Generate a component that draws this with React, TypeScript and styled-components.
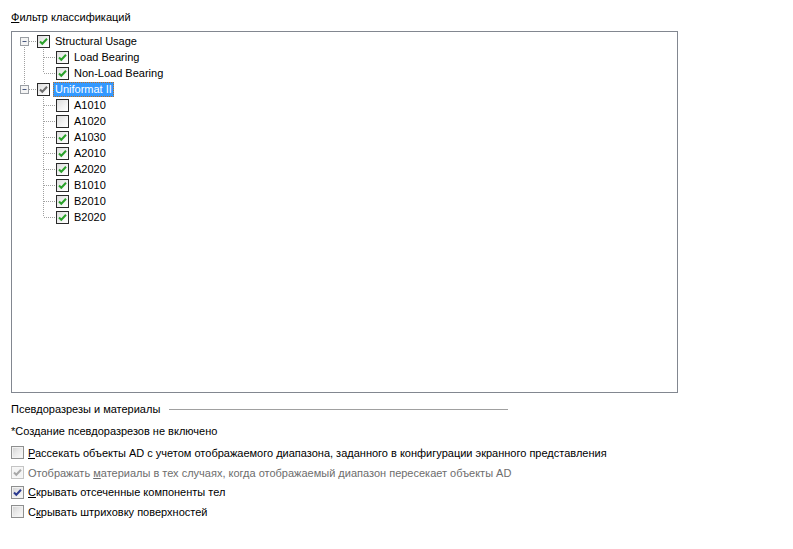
import React from "react";
import styled, { createGlobalStyle } from "styled-components";

const GlobalStyle = createGlobalStyle`
  html, body {
    margin: 0;
    padding: 0;
    background: #ffffff;
  }
  body {
    font-family: "Liberation Sans", Arial, sans-serif;
    font-size: 11px;
    color: #000000;
  }
`;

type TreeItem = {
  label: string;
  checked: boolean;
  partial?: boolean;
  selected?: boolean;
  children?: TreeItem[];
};

const tree: TreeItem[] = [
  {
    label: "Structural Usage",
    checked: true,
    children: [
      { label: "Load Bearing", checked: true },
      { label: "Non-Load Bearing", checked: true },
    ],
  },
  {
    label: "Uniformat II",
    checked: true,
    partial: true,
    selected: true,
    children: [
      { label: "A1010", checked: false },
      { label: "A1020", checked: false },
      { label: "A1030", checked: true },
      { label: "A2010", checked: true },
      { label: "A2020", checked: true },
      { label: "B1010", checked: true },
      { label: "B2010", checked: true },
      { label: "B2020", checked: true },
    ],
  },
];

const options = [
  {
    before: "",
    key: "Р",
    after: "ассекать объекты AD с учетом отображаемого диапазона, заданного в конфигурации экранного представления",
    checked: false,
    disabled: false,
  },
  {
    before: "Отображать ",
    key: "м",
    after: "атериалы в тех случаях, когда отображаемый диапазон пересекает объекты AD",
    checked: true,
    disabled: true,
  },
  {
    before: "",
    key: "С",
    after: "крывать отсеченные компоненты тел",
    checked: true,
    disabled: false,
  },
  {
    before: "С",
    key: "к",
    after: "рывать штриховку поверхностей",
    checked: false,
    disabled: false,
  },
];

const Page = styled.div`
  width: 793px;
  height: 549px;
  box-sizing: border-box;
  padding: 11px 0 0 11px;
  display: flex;
  flex-direction: column;
`;

const Caption = styled.div`
  line-height: 13px;
  height: 13px;
  margin-bottom: 7px;
`;

const TreeBox = styled.div`
  width: 667px;
  height: 362px;
  box-sizing: border-box;
  border: 1px solid #828790;
  padding-top: 1px;
  display: flex;
  flex-direction: column;
`;

const Row = styled.div`
  height: 16px;
  display: flex;
  align-items: center;
`;

const Gutter = styled.div<{ $w: number }>`
  width: ${(p) => p.$w}px;
  height: 16px;
  flex: none;
`;

const Label = styled.span<{ $selected?: boolean }>`
  margin-left: 3px;
  padding: 0 2px;
  height: 15px;
  line-height: 15px;
  box-sizing: border-box;
  white-space: nowrap;
  color: ${(p) => (p.$selected ? "#ffffff" : "#000000")};
  background: ${(p) => (p.$selected ? "#3399ff" : "transparent")};
  outline: ${(p) => (p.$selected ? "1px dotted #c07020" : "none")};
  outline-offset: -1px;
`;

const TreeCheck = styled.span`
  width: 13px;
  height: 13px;
  flex: none;
  box-sizing: border-box;
  border: 1px solid #2a2a2a;
  background: linear-gradient(135deg, #dcdcdc 0%, #f4f4f4 60%, #ffffff 100%);
  display: flex;
  align-items: center;
  justify-content: center;
`;

const SectionHead = styled.div`
  margin-top: 10px;
  height: 13px;
  line-height: 13px;
  display: flex;
  align-items: center;
`;

const SectionRule = styled.span`
  margin-left: 9px;
  width: 339px;
  height: 1px;
  background: #a0a0a0;
`;

const Note = styled.div`
  margin-top: 9px;
  height: 13px;
  line-height: 13px;
`;

const OptionList = styled.div`
  margin-top: 5px;
  display: flex;
  flex-direction: column;
`;

const OptionRow = styled.label<{ $disabled?: boolean }>`
  height: 19.7px;
  display: flex;
  align-items: center;
  color: ${(p) => (p.$disabled ? "#6d6d6d" : "#000000")};
  white-space: nowrap;
`;

const Box = styled.span<{ $disabled?: boolean }>`
  width: 13px;
  height: 13px;
  flex: none;
  box-sizing: border-box;
  margin-right: 4px;
  border: 1px solid ${(p) => (p.$disabled ? "#c4c4c4" : "#8e8f8f")};
  background: ${(p) =>
    p.$disabled
      ? "#f4f4f4"
      : "linear-gradient(135deg, #d0d0d0 0%, #e8e8e8 45%, #fbfbfb 100%)"};
  box-shadow: inset 0 0 0 1px ${(p) => (p.$disabled ? "#f7f7f7" : "#f2f2f2")};
  display: flex;
  align-items: center;
  justify-content: center;
`;

const Key = styled.u`
  text-decoration-thickness: 1px;
  text-underline-offset: 1px;
`;

const Check = ({ color }: { color: string }) => (
  <svg width="9" height="9" viewBox="0 0 9 9">
    <path d="M1 4.5 L3.3 6.8 L8 1.8" fill="none" stroke={color} strokeWidth="2" />
  </svg>
);

const Lines = ({
  w,
  vx,
  top,
  bottom,
  hFrom,
  hTo,
  expander,
}: {
  w: number;
  vx?: number;
  top?: boolean;
  bottom?: boolean;
  hFrom?: number;
  hTo?: number;
  expander?: boolean;
}) => (
  <svg width={w} height="16" style={{ display: "block" }}>
    {vx !== undefined && top && (
      <line x1={vx + 0.5} y1="0" x2={vx + 0.5} y2="8" stroke="#a0a0a0" strokeDasharray="1 1" />
    )}
    {vx !== undefined && bottom && (
      <line x1={vx + 0.5} y1="8" x2={vx + 0.5} y2="16" stroke="#a0a0a0" strokeDasharray="1 1" />
    )}
    {hFrom !== undefined && hTo !== undefined && (
      <line x1={hFrom} y1="8.5" x2={hTo} y2="8.5" stroke="#a0a0a0" strokeDasharray="1 1" />
    )}
    {expander && vx !== undefined && (
      <g>
        <rect x={vx - 3.5} y="4.5" width="8" height="8" fill="#f4f4f4" stroke="#9a9ea4" />
        <line x1={vx - 1.5} y1="8.5" x2={vx + 2.5} y2="8.5" stroke="#4a5a80" />
      </g>
    )}
  </svg>
);

const TreeNodeCheck = ({ item }: { item: TreeItem }) => (
  <TreeCheck>
    {item.checked && <Check color={item.partial ? "#6e6e6e" : "#2aa12a"} />}
  </TreeCheck>
);

export default function App() {
  return (
    <>
      <GlobalStyle />
      <Page>
        <Caption>
          <Key>Ф</Key>ильтр классификаций
        </Caption>
        <TreeBox>
          {tree.map((root, ri) => {
            const lastRoot = ri === tree.length - 1;
            const kids = root.children ?? [];
            return (
              <React.Fragment key={root.label}>
                <Row>
                  <Lines
                    w={25}
                    vx={12}
                    top={ri > 0}
                    bottom={!lastRoot}
                    hFrom={17}
                    hTo={25}
                    expander
                  />
                  <TreeNodeCheck item={root} />
                  <Label $selected={root.selected}>{root.label}</Label>
                </Row>
                {kids.map((kid, ki) => (
                  <Row key={kid.label}>
                    <Gutter $w={25}>
                      {!lastRoot && <Lines w={25} vx={12} top bottom />}
                    </Gutter>
                    <Lines
                      w={19}
                      vx={6}
                      top
                      bottom={ki < kids.length - 1}
                      hFrom={7}
                      hTo={19}
                    />
                    <TreeNodeCheck item={kid} />
                    <Label>{kid.label}</Label>
                  </Row>
                ))}
              </React.Fragment>
            );
          })}
        </TreeBox>
        <SectionHead>
          Псевдоразрезы и материалы
          <SectionRule />
        </SectionHead>
        <Note>*Создание псевдоразрезов не включено</Note>
        <OptionList>
          {options.map((o, i) => (
            <OptionRow key={i} $disabled={o.disabled}>
              <Box $disabled={o.disabled}>
                {o.checked && <Check color={o.disabled ? "#a8a8a8" : "#2b3a8f"} />}
              </Box>
              <span>
                {o.before}
                <Key>{o.key}</Key>
                {o.after}
              </span>
            </OptionRow>
          ))}
        </OptionList>
      </Page>
    </>
  );
}
